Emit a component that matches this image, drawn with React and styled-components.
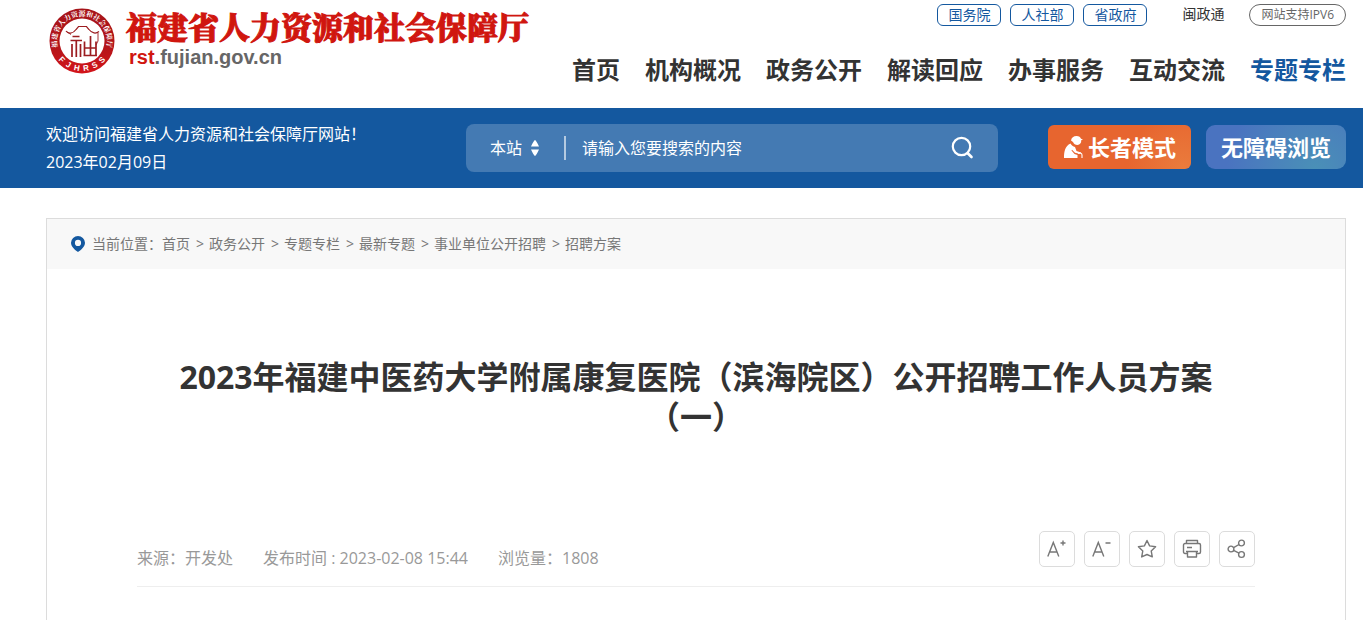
import React from "react";
import styled, { createGlobalStyle, css } from "styled-components";

const GlobalStyle = createGlobalStyle`
  * {
    box-sizing: border-box;
  }
  body {
    margin: 0;
    background: #fff;
    color: #333;
    font-family: "Open Sans", "Noto Sans CJK SC", sans-serif;
    font-size: 16px;
    text-spacing-trim: space-all;
  }
  a {
    color: inherit;
    text-decoration: none;
  }
  button,
  input,
  select {
    font: inherit;
    color: inherit;
  }
`;
const Container = styled.div`
  padding: 0 17px 0 46px;
`;
const Header = styled.header`
  height: 108px;
`;
const HeaderInner = styled(Container)`
  display: flex;
  justify-content: space-between;
`;
const Brand = styled.a`
  display: flex;
  column-gap: 10px;
  padding: 6px 0 0 2px;
`;
const BrandText = styled.span`
  display: flex;
  flex-direction: column;
`;
const BrandName = styled.strong`
  font-family: "Noto Serif CJK SC", "Noto Sans CJK SC", serif;
  font-size: 31px;
  font-weight: 900;
  line-height: 40px;
  color: #d0160f;
  white-space: nowrap;
  -webkit-text-stroke: 1px #d0160f;
`;
const BrandDomain = styled.span`
  padding-left: 3px;
  font-family: "Liberation Sans", Arial, sans-serif;
  font-size: 20px;
  font-weight: bold;
  line-height: 22px;
  color: #666;
  em {
    font-style: normal;
    color: #d0160f;
  }
`;
const HeaderSide = styled.div`
  display: flex;
  flex-direction: column;
  align-items: flex-end;
`;
const TopLinks = styled.div`
  display: flex;
  column-gap: 9px;
  padding-top: 4px;
  font-size: 14px;
  line-height: 20px;
`;
const TopLink = styled.a`
  padding: 0 10px;
  border: 1px solid #14589f;
  border-radius: 6px;
  color: #14589f;
  ${(props) =>
    props.$plain &&
    css`
      padding: 0 16px 0 26px;
      border: 0;
      color: #333;
    `};
  ${(props) =>
    props.$pill &&
    css`
      padding: 0 11px;
      border-color: #666;
      border-radius: 11px;
      font-size: 12px;
      color: #666;
    `};
`;
const Nav = styled.nav`
  display: flex;
  column-gap: 25px;
  padding-top: 26px;
`;
const NavLink = styled.a`
  font-size: 24px;
  font-weight: bold;
  line-height: 36px;
  white-space: nowrap;
  color: ${(props) => (props.$active ? "#14589f" : "#333")};
`;
const Banner = styled.section`
  background: #14589f;
  color: #fff;
`;
const BannerInner = styled(Container)`
  display: flex;
  align-items: center;
  height: 80px;
`;
const Welcome = styled.div`
  flex: 1;
  line-height: 28px;
  white-space: nowrap;
  p {
    margin: 0;
  }
`;
const SearchForm = styled.form`
  display: flex;
  align-items: center;
  width: 532px;
  height: 48px;
  padding: 0 24px;
  border-radius: 8px;
  background: #447ab3;
`;
const ScopeBox = styled.span`
  display: flex;
  align-items: center;
  column-gap: 8px;
  padding-right: 24px;
  border-right: 2px solid #b4cae1;
`;
const ScopeSelect = styled.select`
  appearance: none;
  width: 32px;
  height: 24px;
  padding: 0;
  border: 0;
  outline: 0;
  background: none;
  line-height: 24px;
`;
const SearchInput = styled.input`
  flex: 1;
  min-width: 0;
  height: 32px;
  padding: 0 16px;
  border: 0;
  outline: 0;
  background: none;
  &::placeholder {
    color: #fff;
    opacity: 1;
  }
`;
const SearchButton = styled.button`
  display: flex;
  padding: 0;
  border: 0;
  background: none;
`;
const ModeButtons = styled.div`
  display: flex;
  column-gap: 15px;
  margin-left: 50px;
  padding-bottom: 2px;
`;
const ModeButton = styled.button`
  display: flex;
  align-items: center;
  column-gap: 3px;
  height: 44px;
  padding: 0 15px 2px;
  border: 0;
  border-radius: ${(props) => (props.$soft ? "9px" : "6px")};
  background: ${(props) =>
    props.$soft
      ? "radial-gradient(circle at 78% 100%, #4a90b7 0%, #4a73c0 75%)"
      : "radial-gradient(circle at 95% 100%, #ea7c3d 0%, #e7652f 40%)"};
  color: #fff;
  font-size: 22px;
  font-weight: bold;
  white-space: nowrap;
`;
const Article = styled.main`
  margin: 30px 17px 0 46px;
  border: 1px solid #dcdcdc;
  border-bottom: 0;
`;
const Breadcrumb = styled.nav`
  display: flex;
  align-items: center;
  height: 50px;
  padding: 0 24px;
  background: #f8f8f8;
  color: #777;
  font-size: 14px;
  line-height: 18px;
  svg {
    margin-right: 7px;
  }
`;
const Crumb = styled.span`
  &:not(:last-child)::after {
    content: ">";
    padding: 0 5px 0 6px;
  }
`;
const ArticleBody = styled.div`
  padding: 88px 90px 34px;
`;
const Title = styled.h1`
  margin: 0;
  font-size: 32px;
  font-weight: bold;
  line-height: 40px;
  text-align: center;
`;
const MetaBar = styled.div`
  display: flex;
  justify-content: space-between;
  margin-top: 94px;
  padding-bottom: 17px;
  border-bottom: 1px solid #eee;
`;
const MetaList = styled.div`
  display: flex;
  column-gap: 30px;
  padding-top: 16px;
  color: #999;
  line-height: 22px;
`;
const Tools = styled.div`
  display: flex;
  column-gap: 9px;
`;
const ToolButton = styled.button`
  display: flex;
  align-items: center;
  justify-content: center;
  width: 36px;
  height: 36px;
  padding: 0;
  border: 1px solid #dcdcdc;
  border-radius: 5px;
  background: #fff;
  svg {
    fill: none;
    stroke: #777;
    stroke-width: 1.4;
  }
`;

const Seal = () => (
  <svg width="68" height="70" viewBox="0 0 68 70" aria-hidden="true">
    <defs>
      <linearGradient id="sealRed" x1="0" y1="0" x2="0" y2="1">
        <stop offset="0" stopColor="#a51419" />
        <stop offset="0.6" stopColor="#b5151a" />
        <stop offset="1" stopColor="#d3141a" />
      </linearGradient>
      <path id="sealTop" d="M11.900 46.700A25 25 0 1 1 56.100 46.700" />
      <path id="sealBottom" d="M3.700 38A30.500 30.500 0 0 0 64.300 38" />
    </defs>
    <circle cx="34" cy="35" r="32.5" fill="url(#sealRed)" />
    <circle cx="34" cy="35" r="22.5" fill="#fff" />
    <text
      fill="#fff"
      fontFamily="Noto Serif CJK SC, serif"
      fontSize="7"
      fontWeight="bold"
      textAnchor="middle"
    >
      <textPath href="#sealTop" startOffset="50%">
        福建省人力资源和社会保障厅
      </textPath>
    </text>
    <text
      fill="#fff"
      fontFamily="Liberation Sans, sans-serif"
      fontSize="8"
      fontWeight="bold"
      textAnchor="middle"
    >
      <textPath href="#sealBottom" startOffset="50%">
        {"F\u00a0\u00a0J\u00a0\u00a0H\u00a0\u00a0R\u00a0\u00a0S\u00a0\u00a0S"}
      </textPath>
    </text>
    <g fill="none" stroke="#9c1c20">
      <path
        d="M18 25c2 3 7 3 10-1.500l2.500-3h8l2.500 3c3 4 7 4.500 10 2"
        strokeWidth="1.200"
      />
      <path d="M19 26l4 2.500M50 27v8l-2 4" strokeWidth="0.900" />
      <path
        d="M24.500 30.500h7M22.500 34.500h11.500M28.300 34.500V51M24 38v13M32.500 38v13M42.500 30v20M36.500 35.500v14M48 35.500v14M36.500 42H48M35.500 49.500H49"
        strokeWidth="1.700"
      />
    </g>
  </svg>
);

const ElderIcon = () => (
  <svg width="22" height="24" viewBox="0 0 22 24" fill="#fff" aria-hidden="true">
    <path d="M8 6.500C8.500 3.500 10.500 2 13.500 2c2.500 0 4 1.200 4.500 2.800l2 .7-1.800.8c.3 2.700-1.300 4.700-3.700 4.700-2.300 0-3.700-1-4.500-3z" />
    <path d="M1 24c0-6.500 1-12 6.500-14.500 1 2 2.500 3 4.500 3.500l1.500 4 4.500 1.500-.5 1.500-5.500-1.200-3-3-.5.7 3 3.500 3 1V24z" />
    <path
      d="M15 19.500c1.500-1.200 4-.7 4 1.500v3"
      fill="none"
      stroke="#fff"
      strokeWidth="1.100"
    />
  </svg>
);

const topLinks = ["国务院", "人社部", "省政府"];
const navItems = [
  "首页",
  "机构概况",
  "政务公开",
  "解读回应",
  "办事服务",
  "互动交流",
  "专题专栏",
];
const crumbs = [
  "首页",
  "政务公开",
  "专题专栏",
  "最新专题",
  "事业单位公开招聘",
  "招聘方案",
];

const App = () => {
  return (
    <>
      <GlobalStyle />
      <Header>
        <HeaderInner>
          <Brand href="#">
            <Seal />
            <BrandText>
              <BrandName>福建省人力资源和社会保障厅</BrandName>
              <BrandDomain>
                <em>rst</em>.fujian.gov.cn
              </BrandDomain>
            </BrandText>
          </Brand>
          <HeaderSide>
            <TopLinks>
              {topLinks.map((item) => (
                <TopLink key={item} href="#">
                  {item}
                </TopLink>
              ))}
              <TopLink $plain href="#">
                闽政通
              </TopLink>
              <TopLink $pill href="#">
                网站支持IPV6
              </TopLink>
            </TopLinks>
            <Nav>
              {navItems.map((item) => (
                <NavLink key={item} href="#" $active={item === "专题专栏"}>
                  {item}
                </NavLink>
              ))}
            </Nav>
          </HeaderSide>
        </HeaderInner>
      </Header>
      <Banner>
        <BannerInner>
          <Welcome>
            <p>欢迎访问福建省人力资源和社会保障厅网站！</p>
            <p>2023年02月09日</p>
          </Welcome>
          <SearchForm>
            <ScopeBox>
              <ScopeSelect aria-label="搜索范围">
                <option>本站</option>
              </ScopeSelect>
              <svg width="10" height="18" viewBox="0 0 10 18" fill="#fff">
                <path d="M5 1Q6 1 9 7.500H1Q4 1 5 1zM1 10.500h8Q6 17 5 17T1 10.500z" />
              </svg>
            </ScopeBox>
            <SearchInput
              type="text"
              aria-label="搜索"
              placeholder="请输入您要搜索的内容"
            />
            <SearchButton type="button" aria-label="搜索">
              <svg width="24" height="24" viewBox="0 0 24 24" fill="none">
                <circle cx="11.500" cy="10.500" r="8.700" stroke="#fff" strokeWidth="2.200" />
                <path
                  d="M18 17.500l3.500 3.500"
                  stroke="#fff"
                  strokeWidth="2.600"
                  strokeLinecap="round"
                />
              </svg>
            </SearchButton>
          </SearchForm>
          <ModeButtons>
            <ModeButton type="button">
              <ElderIcon />
              长者模式
            </ModeButton>
            <ModeButton type="button" $soft>
              无障碍浏览
            </ModeButton>
          </ModeButtons>
        </BannerInner>
      </Banner>
      <Article>
        <Breadcrumb>
          <svg width="14" height="16" viewBox="0 0 14 16" aria-hidden="true">
            <path
              d="M7 0a7 7 0 0 1 7 6.800C14 11 9.500 14.500 7 16 4.500 14.500 0 11 0 6.800A7 7 0 0 1 7 0zm0 3.800a3.100 3.100 0 1 0 0 6.200 3.100 3.100 0 0 0 0-6.200z"
              fill="#14589f"
            />
          </svg>
          <span>当前位置：</span>
          {crumbs.map((item) => (
            <Crumb key={item}>
              <a href="#">{item}</a>
            </Crumb>
          ))}
        </Breadcrumb>
        <ArticleBody>
          <Title>
            2023年福建中医药大学附属康复医院（滨海院区）公开招聘工作人员方案（一）
          </Title>
          <MetaBar>
            <MetaList>
              <span>来源：开发处</span>
              <span>发布时间 : 2023-02-08 15:44</span>
              <span>浏览量：1808</span>
            </MetaList>
            <Tools>
              <ToolButton type="button" aria-label="放大字号">
                <svg width="20" height="20" viewBox="0 0 20 20">
                  <path d="M.8 17.500L6.300 3.500l5.500 14M3 13h7M13.500 4h5M16 1.500v5" />
                </svg>
              </ToolButton>
              <ToolButton type="button" aria-label="缩小字号">
                <svg width="20" height="20" viewBox="0 0 20 20">
                  <path d="M.8 17.500L6.300 3.500l5.500 14M3 13h7M13.500 4h5" />
                </svg>
              </ToolButton>
              <ToolButton type="button" aria-label="收藏">
                <svg width="20" height="20" viewBox="0 0 20 20">
                  <path
                    d="M10 1.500l2.600 5.400 6 .8-4.400 4.200 1.100 6L10 15.500l-5.300 2.400 1.100-6L1.400 7.700l6-.8z"
                    strokeLinejoin="round"
                  />
                </svg>
              </ToolButton>
              <ToolButton type="button" aria-label="打印">
                <svg width="20" height="20" viewBox="0 0 20 20">
                  <path
                    d="M4.500 4.500V1.500h11v3M5 14.500H3A1.500 1.500 0 0 1 1.500 13V6A1.500 1.500 0 0 1 3 4.500h14A1.500 1.500 0 0 1 18.500 6v7a1.500 1.500 0 0 1-1.500 1.500h-2M4 12.500h12M5.500 12.500h9V18h-9zM5 8.500h5"
                    strokeLinejoin="round"
                  />
                </svg>
              </ToolButton>
              <ToolButton type="button" aria-label="分享">
                <svg width="20" height="20" viewBox="0 0 20 20">
                  <circle cx="4" cy="10" r="2.900" />
                  <circle cx="14.500" cy="4" r="2.900" />
                  <circle cx="14.500" cy="15.500" r="2.900" />
                  <path d="M6.600 8.700l5.400-3.200M6.600 11.300l5.400 2.900" />
                </svg>
              </ToolButton>
            </Tools>
          </MetaBar>
        </ArticleBody>
      </Article>
    </>
  );
};

export default App;
